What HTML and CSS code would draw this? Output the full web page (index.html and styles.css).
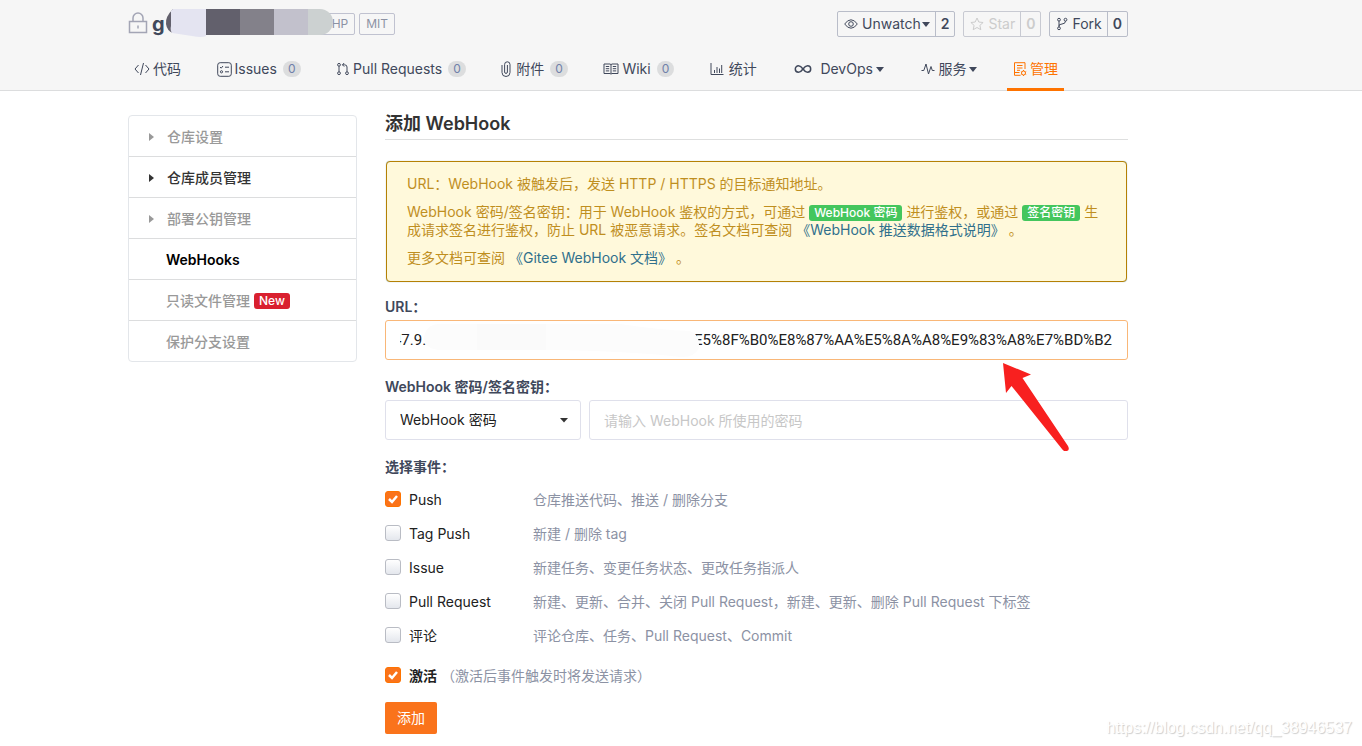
FILE: index.html
```html
<!DOCTYPE html>
<html lang="zh-CN">
<head>
<meta charset="utf-8">
<title>添加 WebHook</title>
<link rel="stylesheet" href="styles.css">
</head>
<body>
<header class="header">
  <div class="container">
    <div class="repo-row">
      <div class="repo-name">
        <svg class="lock" viewBox="0 0 20 22" width="20" height="22"><path d="M1.500 9.500h17v11h-17zM5 9.500V6a5 5 0 0 1 10 0v3.500M10 13.500v3"/></svg>
        <h1 class="repo-title">g</h1>
        <span class="tag tag-lang">PHP</span>
        <span class="tag">MIT</span>
        <svg class="title-mask" viewBox="0 0 170 28" width="170" height="28">
          <path fill="#62606c" d="M8 0Q0 8 1 15Q2 22 8 24z"/>
          <path fill="#e4e4f1" d="M8 0H41V27Q37 29 27 27L7 24Q5 22 6 17L6 2z"/>
          <path fill="#62606c" d="M41 0h34v26H41z"/>
          <path fill="#83818a" d="M75 0h34v26H75z"/>
          <path fill="#c2c1cc" d="M109 0h34v26h-34z"/>
          <path fill="#ccd1d1" d="M143 0h12a13 13 0 0 1 0 26h-12z"/>
        </svg>
      </div>
      <div class="actions">
        <div class="split">
          <button class="split-main" type="button"><svg class="ico" viewBox="0 0 14 14" width="14" height="14"><path d="M.7 7Q3.500 2.800 7 2.800T13.300 7Q10.500 11.200 7 11.200T.7 7z"/><circle cx="7" cy="7" r="2.300"/></svg><span>Unwatch</span><i class="caret"></i></button>
          <a class="split-count" href="#">2</a>
        </div>
        <div class="split split-off">
          <button class="split-main" type="button"><svg class="ico" viewBox="0 0 14 14" width="14" height="14"><path d="M7 1l1.800 4 4.300.5-3.200 2.900.9 4.300L7 10.500l-3.800 2.200.9-4.300L.9 5.500 5.200 5z"/></svg><span>Star</span></button>
          <a class="split-count" href="#">0</a>
        </div>
        <div class="split">
          <button class="split-main" type="button"><svg class="ico" viewBox="0 0 12 14" width="12" height="14"><circle cx="3" cy="2.700" r="1.400"/><circle cx="9.500" cy="2.700" r="1.400"/><circle cx="3" cy="11.300" r="1.400"/><path d="M3 4.100v5.800M9.500 4.100Q9.500 6.800 6 7T3 9.300"/></svg><span>Fork</span></button>
          <a class="split-count" href="#">0</a>
        </div>
      </div>
    </div>
    <nav class="nav">
      <a class="nav-item" href="#"><svg class="ico" viewBox="0 0 16 14" width="16" height="14"><path d="M4.500 3L1 7l3.500 4M11.500 3L15 7l-3.500 4M9.500 1l-3 12"/></svg>代码</a>
      <a class="nav-item" href="#"><svg class="ico" viewBox="0 0 15 15" width="15" height="15"><rect x=".7" y=".7" width="13.600" height="13.600" rx="2.500"/><path d="M3 5l1.200 1.200L6 4M8 5.200h4M8 9.800h4"/><circle cx="4.500" cy="9.800" r="1.100"/></svg>Issues<span class="badge">0</span></a>
      <a class="nav-item" href="#"><svg class="ico" viewBox="0 0 14 14" width="14" height="14"><circle cx="3" cy="2.800" r="1.400"/><circle cx="3" cy="11.200" r="1.400"/><circle cx="11" cy="11.200" r="1.400"/><path d="M3 4.200v5.600M11 9.800V5Q11 2.800 8.500 2.800H6.500M8.200 1L6.400 2.800 8.200 4.600"/></svg>Pull Requests<span class="badge">0</span></a>
      <a class="nav-item" href="#"><svg class="ico clip" viewBox="0 0 10 16" width="10" height="16"><path d="M1 4v7.500a4 4 0 0 0 8 0V3.500a2.700 2.700 0 0 0-5.400 0V11a1.400 1.400 0 0 0 2.800 0V4"/></svg>附件<span class="badge">0</span></a>
      <a class="nav-item" href="#"><svg class="ico" viewBox="0 0 16 14" width="16" height="14"><path d="M1 2h6l1 .6L9 2h6v9.500H9l-1 .6-1-.6H1zM8 2.600v9M2.800 4.500h3.400M2.800 6.700h3.400M2.800 8.900h3.400M9.800 4.500h3.400M9.800 6.700h3.400M9.800 8.900h3.400"/></svg>Wiki<span class="badge">0</span></a>
      <a class="nav-item" href="#"><svg class="ico stat" viewBox="0 0 14 14" width="14" height="14"><path d="M1 1v11.500h12.500M4.500 8v3M7 5v6M9.500 6.500V11M11.700 3v8"/></svg>统计</a>
      <a class="nav-item nav-devops" href="#"><svg class="ico loop" viewBox="0 0 18 14" width="18" height="14"><path d="M9 7Q6.800 3.800 4.500 3.800a3.200 3.200 0 0 0 0 6.400Q6.800 10.200 9 7T13.500 3.800a3.200 3.200 0 0 1 0 6.400Q11.200 10.200 9 7z"/></svg>DevOps<i class="caret"></i></a>
      <a class="nav-item" href="#"><svg class="ico" viewBox="0 0 14 14" width="14" height="14"><path d="M.5 8.500h2.300L5 2l2.500 10L10 4.500l1.300 4h2.200"/></svg>服务<i class="caret"></i></a>
      <a class="nav-item nav-active" href="#"><svg class="ico" viewBox="0 0 14 16" width="14" height="16"><path d="M12 8V1.700H1.500v12.600h6M1.500 11.500h5M4 4.500h5.500M4 7h5.500M4 9.300h3"/><circle cx="10.500" cy="12" r="2"/><path d="M10.500 9v1M10.500 14v1M7.900 10.500l.8.500M12.300 13l.9.500M13.200 10.500l-.9.500M8.700 13l-.8.500"/></svg>管理</a>
    </nav>
  </div>
</header>

<div class="container layout">
  <aside class="side">
    <a class="side-item side-parent" href="#"><i class="tri"></i>仓库设置</a>
    <a class="side-item side-parent side-dark" href="#"><i class="tri"></i>仓库成员管理</a>
    <a class="side-item side-parent" href="#"><i class="tri"></i>部署公钥管理</a>
    <a class="side-item side-current" href="#">WebHooks</a>
    <a class="side-item" href="#">只读文件管理<span class="new">New</span></a>
    <a class="side-item" href="#">保护分支设置</a>
  </aside>

  <main class="main">
    <h2 class="heading">添加 WebHook</h2>
    <div class="notice">
      <p>URL：WebHook 被触发后，发送 HTTP / HTTPS 的目标通知地址。</p>
      <p>WebHook 密码/签名密钥：用于 WebHook 鉴权的方式，可通过 <span class="label">WebHook 密码</span> 进行鉴权，或通过 <span class="label">签名密钥</span> 生成请求签名进行鉴权，防止 URL 被恶意请求。签名文档可查阅 <a href="#">《WebHook 推送数据格式说明》</a> 。</p>
      <p>更多文档可查阅 <a href="#">《Gitee WebHook 文档》</a> 。</p>
    </div>
    <form class="form">
      <div class="field">
        <label class="field-label" for="url">URL：</label>
        <div class="url-box">
          <input class="input input-url" id="url" type="text" value="47.9.&nbsp;&nbsp;&nbsp;&nbsp;&nbsp;&nbsp;&nbsp;&nbsp;&nbsp;&nbsp;&nbsp;&nbsp;&nbsp;&nbsp;&nbsp;&nbsp;&nbsp;&nbsp;&nbsp;&nbsp;&nbsp;&nbsp;&nbsp;&nbsp;&nbsp;&nbsp;&nbsp;&nbsp;&nbsp;&nbsp;&nbsp;&nbsp;&nbsp;&nbsp;&nbsp;&nbsp;&nbsp;&nbsp;&nbsp;&nbsp;&nbsp;&nbsp;&nbsp;&nbsp;&nbsp;&nbsp;&nbsp;&nbsp;&nbsp;&nbsp;&nbsp;&nbsp;&nbsp;&nbsp;&nbsp;&nbsp;&nbsp;&nbsp;&nbsp;&nbsp;&nbsp;&nbsp;&nbsp;&nbsp;&nbsp;&nbsp;&nbsp;&nbsp;&nbsp;&nbsp;&nbsp;&nbsp;E5%8F%B0%E8%87%AA%E5%8A%A8%E9%83%A8%E7%BD%B2">
          <svg class="url-mask" viewBox="0 0 320 36" width="320" height="36">
            <path fill="#fff" d="M0 4h10v28H0z"/>
            <path fill="#fcfcfc" d="M48 2H230Q270 8 300 9Q310 12 309 26Q304 36 290 35Q240 29 160 28H48Q34 26 34 15Q36 3 48 2z"/>
            <path fill="#fafafa" d="M87 2h69v26H87z"/>
          </svg>
          <svg class="arrow" viewBox="0 0 68 88" width="68" height="88"><path fill="#f8201f" d="M1 0L29 11.500L20.500 15L66 83Q68 87 65 88Q62 89 60 86L9.500 23L4 30z"/></svg>
        </div>
      </div>
      <div class="field">
        <label class="field-label" for="secret">WebHook 密码/签名密钥：</label>
        <div class="secret-row">
          <select class="input input-select" aria-label="验证方式"><option>WebHook 密码</option><option>签名密钥</option></select>
          <input class="input input-secret" id="secret" type="text" placeholder="请输入 WebHook 所使用的密码">
        </div>
      </div>
      <fieldset class="events">
        <legend class="field-label">选择事件：</legend>
        <div class="event"><input class="check" id="e1" type="checkbox" checked><label class="event-name" for="e1">Push</label><span class="hint">仓库推送代码、推送 / 删除分支</span></div>
        <div class="event"><input class="check" id="e2" type="checkbox"><label class="event-name" for="e2">Tag Push</label><span class="hint">新建 / 删除 tag</span></div>
        <div class="event"><input class="check" id="e3" type="checkbox"><label class="event-name" for="e3">Issue</label><span class="hint">新建任务、变更任务状态、更改任务指派人</span></div>
        <div class="event"><input class="check" id="e4" type="checkbox"><label class="event-name" for="e4">Pull Request</label><span class="hint">新建、更新、合并、关闭 Pull Request，新建、更新、删除 Pull Request 下标签</span></div>
        <div class="event"><input class="check" id="e5" type="checkbox"><label class="event-name" for="e5">评论</label><span class="hint">评论仓库、任务、Pull Request、Commit</span></div>
      </fieldset>
      <div class="event event-active"><input class="check" id="active" type="checkbox" checked><label class="active-name" for="active">激活</label><span class="hint">（激活后事件触发时将发送请求）</span></div>
      <button class="submit" type="submit">添加</button>
    </form>
  </main>
</div>
<div class="watermark">https://blog.csdn.net/qq_38946537</div>
</body>
</html>
```
FILE: styles.css
```css
* { box-sizing: border-box; }
body {
  margin: 0;
  min-height: 100vh;
  position: relative;
  background: #fff;
  color: #212121;
  font: 14px/18px Inter, "Noto Sans CJK SC", sans-serif;
}
a { text-decoration: none; color: inherit; }
button, input, select { font: inherit; color: inherit; }
.container { max-width: 1000px; margin-left: 128px; }

.header { background: #f6f6f6; border-bottom: 1px solid #dcddde; padding-top: 10px; color: #40485b; }
.repo-row { display: flex; justify-content: space-between; align-items: center; height: 28px; }
.repo-name { display: flex; align-items: center; position: relative; }
.lock { fill: none; stroke: #a3a5b5; stroke-width: 1.5; margin: 0 4px 2px 0; }
.repo-title { margin: 0; font-size: 20px; line-height: 28px; width: 162px; }
.tag { border: 1px solid #c0c2d0; border-radius: 2px; color: #8c92a4; font-size: 12px; line-height: 20px; padding: 0 6px; margin-left: 4px; }
.tag-lang { margin-left: 3px; }
.title-mask { position: absolute; left: 37px; top: -1px; }
.actions { display: flex; gap: 8px; }
.split { display: flex; height: 26px; border: 1px solid #b9bdc9; border-radius: 2px; }
.split-main { display: flex; align-items: center; gap: 4px; border: 0; background: none; padding: 0 5px 0 6px; }
.split-main .caret { margin-left: -3px; }
.split-count { border-left: 1px solid #b9bdc9; padding: 0 5px; font-weight: 600; line-height: 24px; }
.split-off, .split-off .split-count { color: #ccc; border-color: #c8cad2; }
.ico { fill: none; stroke: currentColor; stroke-width: 1; flex: none; }
.caret { border: 4px solid transparent; border-top: 5px solid currentColor; border-bottom: 0; }

.nav { display: flex; justify-content: space-between; max-width: 936px; margin: 10px 0 -1px; }
.nav-item { display: flex; align-items: center; gap: 3px; height: 43px; padding: 2px 6px 0; border-bottom: 3px solid transparent; white-space: nowrap; }
.nav-item .clip { margin-right: 2px; }
.nav-item .stat { margin-right: 2px; }
.nav-item .loop { margin-right: 5px; stroke-width: 1.5; }
.nav-devops { padding: 2px 8px 0; }
.nav-active { color: #fe7300; border-color: #fe7300; }
.badge { background: #dcddde; color: #7080aa; border-radius: 8px; font-size: 12px; line-height: 16px; padding: 0 5px; margin-left: 3px; }

.layout { display: flex; align-items: flex-start; gap: 28px; padding-top: 24px; }
.side { flex: 0 0 229px; border: 1px solid #e3e6ea; border-radius: 4px; }
.side-item { display: flex; align-items: center; height: 41px; padding: 2px 0 0 37px; color: #999; border-bottom: 1px solid #dcddde; font-weight: 500; }
.side-item:last-child { border-bottom: 0; height: 40px; }
.side-parent { padding-left: 20px; gap: 13px; }
.side-dark { color: #333; }
.side-current { color: #000; font-weight: 600; }
.tri { border: 4px solid transparent; border-left: 5px solid currentColor; border-right: 0; }
.new { background: #d9202f; color: #fff; font-size: 12px; line-height: 16px; border-radius: 3px; padding: 0 5px; margin-left: 4px; }

.main { flex: 1; min-width: 0; }
.heading { margin: 0; font-size: 18px; line-height: 18px; padding-bottom: 6px; border-bottom: 1px solid #dedfdf; font-weight: 600; color: #333; }
.notice { margin: 21px 1px 16px; padding: 13px 19px 14px 20px; border: 1px solid #b58105; border-radius: 4px; background: #fff9db; box-shadow: 0 0 1px #8aa; }
.notice p { margin: 0 0 10px; color: #bf8f1f; }
.notice p:last-child { margin: 0; }
.notice a { color: #30708c; }
.label { background: #44c65d; color: #fff; font-size: 12px; font-weight: 500; line-height: 16px; border-radius: 3px; padding: 0 5px; display: inline-block; }
.field { margin-bottom: 18px; }
.field-label { display: block; font-weight: 600; color: #40485b; margin-bottom: 4px; padding: 0; }
.url-box { position: relative; }
.input { display: block; height: 40px; border: 1px solid #dfe0eb; border-radius: 3px; background: #fff; padding: 0 14px; outline: 0; }
.input-url { width: 100%; border-color: #f9b778; text-align: right; padding: 0 15px 0 4px; font-family: Roboto, sans-serif; font-size: 15px; }
.url-mask { position: absolute; left: 5px; top: 2px; }
.arrow { position: absolute; right: 58px; top: 43px; }
.secret-row { display: flex; gap: 8px; }
.input-select { flex: 0 0 196px; appearance: none; background: #fff url("data:image/svg+xml,%3Csvg xmlns='http://www.w3.org/2000/svg' width='8' height='5'%3E%3Cpath d='M0 0h8L4 4.500z' fill='%23333'/%3E%3C/svg%3E") no-repeat right 12px center; }
.input-secret { flex: 1; min-width: 0; }
.input-secret::placeholder { color: #c7c7c7; }
.events { border: 0; margin: 0; padding: 0; }
.events .field-label { margin-bottom: 7px; }
.event { display: flex; align-items: center; height: 34px; }
.event-name { width: 124px; }
.active-name { font-weight: 600; margin-right: 4px; }
.event-active { margin-top: 6px; }
.hint { color: #8c92a4; }
.check { appearance: none; width: 16px; height: 16px; margin: 0 8px 2px 0; border: 1px solid #b9bcc4; border-radius: 3px; background: linear-gradient(#fff, #e4e7ed); }
.check:checked { border-color: #fe7300; background: #fa731b url("data:image/svg+xml,%3Csvg xmlns='http://www.w3.org/2000/svg' width='12' height='10'%3E%3Cpath d='M2 5l3 3 5-6' fill='none' stroke='white' stroke-width='2.500'/%3E%3C/svg%3E") no-repeat center; }
.submit { display: block; border: 0; border-radius: 2px; background: #fa731b; color: #fff; height: 32px; padding: 0 12px; margin-top: 9px; }
.watermark { position: absolute; right: 10px; bottom: 8px; font: 16px/20px "Liberation Sans", Arial, sans-serif; color: #fff; text-shadow: 1px 1px 1px #ccc; }
```
